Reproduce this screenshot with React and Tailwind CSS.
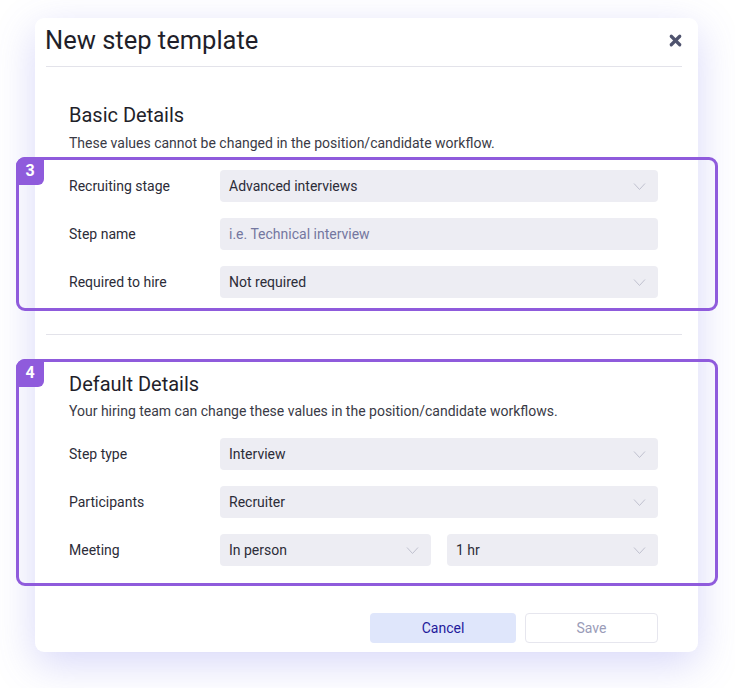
import { X } from 'lucide-react'

function Chevron() {
  return (
    <svg className="h-[9px] w-[13px] text-[#c0c1cf]" viewBox="0 0 13 9" fill="none" stroke="currentColor" strokeWidth="1">
      <polyline points="1,1.5 6.5,7.5 12,1.5" />
    </svg>
  )
}

function Field({ value, placeholder, select = true, className = '' }) {
  return (
    <div className={`flex h-8 items-center justify-between rounded-[4px] bg-[#ededf3] pl-[9px] pr-[12px] text-sm ${className}`}>
      {placeholder ? (
        <span className="text-[#7477a0]">{placeholder}</span>
      ) : (
        <span className="text-[#2c2c38]">{value}</span>
      )}
      {select && <Chevron />}
    </div>
  )
}

function Row({ label, children }) {
  return (
    <div className="flex items-center">
      <div className="w-[151px] shrink-0 text-sm text-[#2c2c38]">{label}</div>
      <div className="flex flex-1 gap-4">{children}</div>
    </div>
  )
}

function Highlight({ n, className }) {
  return (
    <div className={`pointer-events-none absolute rounded-[9px] border-[3px] border-[#8f5bdc] ${className}`}>
      <div className="absolute -left-[3px] -top-[3px] flex h-[28px] w-[28px] items-center justify-center rounded-tl-[9px] rounded-br-[6px] bg-[#8f5bdc] text-[16px] font-bold text-white">
        {n}
      </div>
    </div>
  )
}

export default function App() {
  return (
    <div className="min-h-[688px] w-[735px] bg-white pt-[18px] font-['Roboto',sans-serif]">
      <div className="ml-[35px] w-[663px] rounded-[9px] bg-white pb-[9px] pl-[11px] pr-[16px] pt-[6px] shadow-[0_12px_40px_rgba(100,100,230,0.25)]">
        <div className="flex h-8 items-center justify-between">
          <h1 className="-ml-px text-[25.5px] font-normal text-[#1f1f2a]">New step template</h1>
          <X className="mr-[-2px] h-[17px] w-[17px] text-[#4f536e]" strokeWidth={4.5} />
        </div>
        <div className="mt-[10px] h-px bg-[#e3e3ea]" />

        <div className="pl-[23px] pr-[24px] pt-[34px]">
          <h2 className="text-[20px] leading-7 text-[#1f1f2a]">Basic Details</h2>
          <p className="mt-[4px] text-[14px] leading-5 text-[#3a3a46]">These values cannot be changed in the position/candidate workflow.</p>
          <div className="relative mt-[17px] flex flex-col gap-4">
            <Highlight n="3" className="-bottom-[13px] -left-[53px] -right-[60px] -top-[13px]" />
            <Row label="Recruiting stage">
              <Field value="Advanced interviews" className="flex-1" />
            </Row>
            <Row label="Step name">
              <Field placeholder="i.e. Technical interview" select={false} className="flex-1" />
            </Row>
            <Row label="Required to hire">
              <Field value="Not required" className="flex-1" />
            </Row>
          </div>
        </div>

        <div className="mt-[36px] h-px bg-[#e3e3ea]" />

        <div className="relative mt-[35px] pl-[23px] pr-[24px]">
          <Highlight n="4" className="-bottom-[20px] -left-[30px] -right-[36px] -top-[11px]" />
          <h2 className="text-[20px] leading-7 text-[#1f1f2a]">Default Details</h2>
          <p className="mt-[3px] text-[14px] leading-5 text-[#3a3a46]">Your hiring team can change these values in the position/candidate workflows.</p>
          <div className="mt-[17px] flex flex-col gap-4">
            <Row label="Step type">
              <Field value="Interview" className="flex-1" />
            </Row>
            <Row label="Participants">
              <Field value="Recruiter" className="flex-1" />
            </Row>
            <Row label="Meeting">
              <Field value="In person" className="flex-1" />
              <Field value="1 hr" className="flex-1" />
            </Row>
          </div>
        </div>

        <div className="mt-[47px] flex justify-end gap-[9px] pr-[24px]">
          <button className="h-[30px] w-[146px] rounded-[4px] bg-[#dfe6fb] text-sm text-[#1f1a9c]">Cancel</button>
          <button className="h-[30px] w-[133px] rounded-[4px] border border-[#e6e6ee] bg-white text-sm text-[#9a9cb8]">Save</button>
        </div>
      </div>
    </div>
  )
}
